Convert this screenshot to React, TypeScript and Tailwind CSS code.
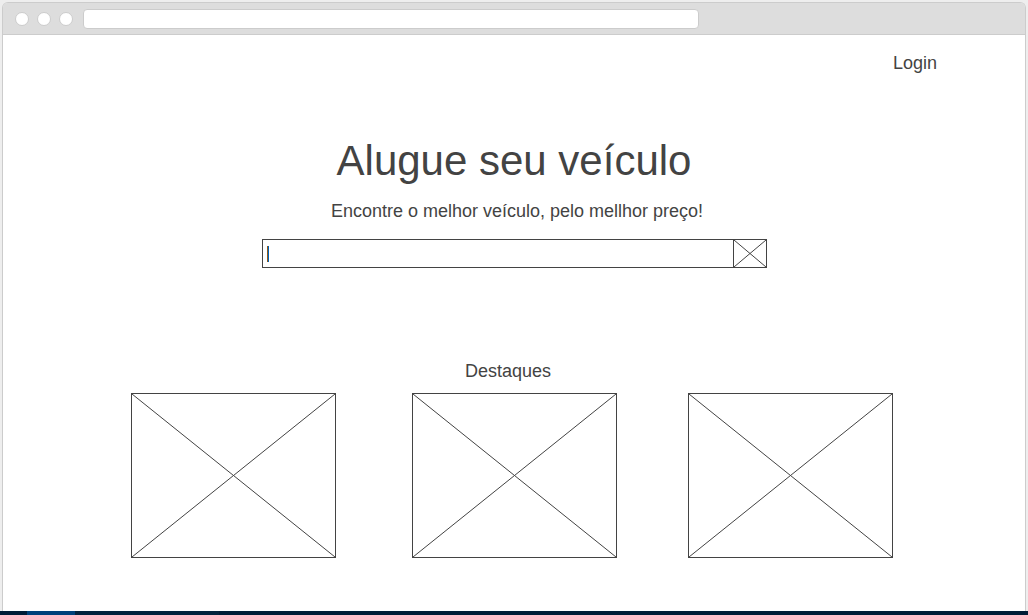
import React from "react";

const highlights = ["Destaque 1", "Destaque 2", "Destaque 3"];

function Cross({ width, height }: { width: number; height: number }) {
  return (
    <svg
      className="block h-full w-full"
      viewBox={`0 0 ${width} ${height}`}
      preserveAspectRatio="none"
      stroke="#434343"
      strokeWidth="1"
      fill="none"
      aria-hidden="true"
    >
      <line x1="0" y1="0" x2={width} y2={height} />
      <line x1={width} y1="0" x2="0" y2={height} />
    </svg>
  );
}

function BrowserBar() {
  return (
    <header className="h-[31px] rounded-t-[4px] bg-[#dddddd] pt-1.5 pl-3">
      <div className="flex items-center gap-2">
        <span className="size-3.5 rounded-full border border-[#cccccc] bg-white" />
        <span className="size-3.5 rounded-full border border-[#cccccc] bg-white" />
        <span className="size-3.5 rounded-full border border-[#cccccc] bg-white" />
        <input
          type="text"
          aria-label="Endereço"
          className="ml-0.5 h-5 w-[61%] rounded-[4px] border border-[#cccccc] bg-white px-2 text-xs outline-none"
        />
      </div>
    </header>
  );
}

export default function App() {
  return (
    <div className="flex min-h-screen flex-col bg-[#eeeeee] font-['Liberation_Sans',Arial,sans-serif] text-lg leading-5 text-[#434343]">
      <div className="mx-0.5 mt-0.5 flex grow flex-col rounded-t-md border border-b-0 border-[#cccccc] bg-white">
        <BrowserBar />
        <div className="grow border-t border-[#cccccc]">
          <nav className="flex justify-end pt-[18px] pr-[88px]">
            <a href="#login">Login</a>
          </nav>

          <main className="flex flex-col items-center pb-[53px]">
            <h1 className="mt-16 text-[42px] leading-12">Alugue seu veículo</h1>
            <p className="mt-4 pl-1.5">Encontre o melhor veículo, pelo mellhor preço!</p>

            <form
              className="mt-[18px] flex h-[29px] w-[505px] max-w-full border border-[#434343]"
              onSubmit={(e) => e.preventDefault()}
            >
              <div className="relative grow">
                <input
                  type="text"
                  aria-label="Buscar veículo"
                  className="h-full w-full px-1 outline-none"
                />
                <span className="absolute top-1.5 left-1 h-4 w-0.5 border-l border-[#8f5a1c] bg-[#0062b8]" />
              </div>
              <button type="submit" aria-label="Buscar" className="w-[33px] border-l border-[#434343]">
                <Cross width={32} height={27} />
              </button>
            </form>

            <h2 className="mt-[93px] pr-3">Destaques</h2>
            <div className="mt-3 grid grid-cols-[281px_276px_205px] pr-1">
              {highlights.map((name) => (
                <div
                  key={name}
                  role="img"
                  aria-label={name}
                  className="h-[165px] w-[205px] border border-[#434343]"
                >
                  <Cross width={203} height={163} />
                </div>
              ))}
            </div>
          </main>
        </div>
      </div>
      <footer className="flex h-1 bg-[#001c36]">
        <span className="ml-[27px] h-1 w-12 bg-[#00417a]" />
        <span className="h-1 w-36 bg-[#02233d]" />
      </footer>
    </div>
  );
}
